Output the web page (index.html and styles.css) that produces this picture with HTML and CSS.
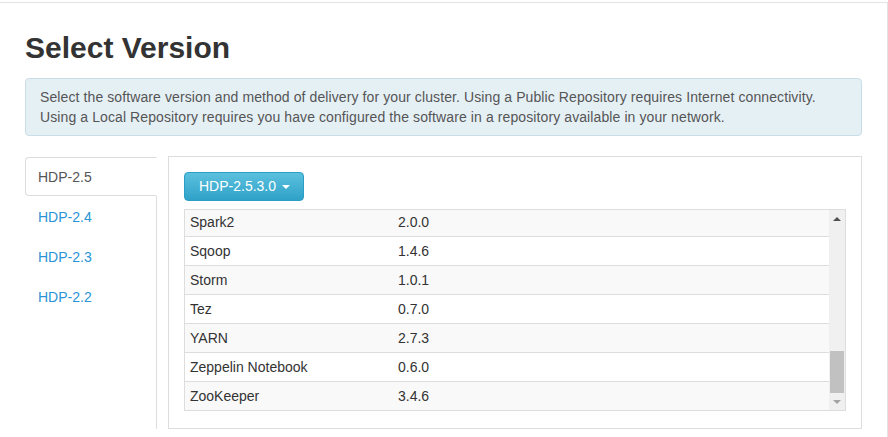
FILE: index.html
```html
<!DOCTYPE html>
<html>
<head>
<meta charset="utf-8">
<title>Select Version</title>
<link rel="stylesheet" href="styles.css">
</head>
<body>
<div class="page">
  <h2 class="title">Select Version</h2>
  <div class="alert">Select the software version and method of delivery for your cluster. Using a Public Repository requires Internet connectivity.<br>Using a Local Repository requires you have configured the software in a repository available in your network.</div>
  <div class="stack">
    <ul class="tabs">
      <li class="tab active"><a class="tab-link">HDP-2.5</a></li>
      <li class="tab"><a class="tab-link">HDP-2.4</a></li>
      <li class="tab"><a class="tab-link">HDP-2.3</a></li>
      <li class="tab"><a class="tab-link">HDP-2.2</a></li>
    </ul>
    <div class="panel">
      <button class="btn-info">HDP-2.5.3.0 <span class="caret"></span></button>
      <div class="grid">
        <div class="rows">
          <div class="row stripe"><span class="cell">Spark2</span><span class="cell">2.0.0</span></div>
          <div class="row"><span class="cell">Sqoop</span><span class="cell">1.4.6</span></div>
          <div class="row stripe"><span class="cell">Storm</span><span class="cell">1.0.1</span></div>
          <div class="row"><span class="cell">Tez</span><span class="cell">0.7.0</span></div>
          <div class="row stripe"><span class="cell">YARN</span><span class="cell">2.7.3</span></div>
          <div class="row"><span class="cell">Zeppelin Notebook</span><span class="cell">0.6.0</span></div>
          <div class="row stripe"><span class="cell">ZooKeeper</span><span class="cell">3.4.6</span></div>
        </div>
        <div class="scrollbar">
          <div class="sb-btn"><span class="arrow-up"></span></div>
          <div class="sb-track"><div class="sb-thumb"></div></div>
          <div class="sb-btn"><span class="arrow-down"></span></div>
        </div>
      </div>
    </div>
  </div>
</div>
</body>
</html>
```

FILE: styles.css
```css
html, body {
  margin: 0;
  padding: 0;
  background: #fff;
}
body {
  font-family: "Liberation Sans", Arial, Helvetica, sans-serif;
  font-size: 14px;
  line-height: 20px;
  color: #333;
}
.page {
  box-sizing: border-box;
  width: 888px;
  height: 435px;
  margin-top: 2px;
  border-top: 1px solid #e3e3e3;
  border-right: 1px solid #e3e3e3;
  padding: 0 25px;
}
.title {
  margin: 28px 0 14px;
  font-size: 30px;
  line-height: 33px;
  font-weight: bold;
  color: #333;
}
.alert {
  padding: 8px 14px;
  border: 1px solid #c9dde6;
  border-radius: 4px;
  background: #e5f0f5;
  color: #555;
  margin-bottom: 20px;
  letter-spacing: 0.1px;
  white-space: nowrap;
}
.stack {
  display: flex;
  gap: 11px;
  height: 273px;
}
.tabs {
  list-style: none;
  margin: 1px 0 0;
  padding: 0;
  width: 132px;
  box-sizing: border-box;
  border-right: 1px solid #ddd;
}
.tab {
  margin-right: -1px;
  margin-bottom: 1px;
}
.tab-link {
  display: block;
  padding: 9px 12px 8px;
  border: 1px solid transparent;
  border-radius: 4px 0 0 4px;
  color: #2a94d6;
  cursor: pointer;
}
.tab.active .tab-link {
  border-color: #ddd;
  border-right-color: transparent;
  background: #fff;
  color: #555;
}
.panel {
  flex: 1;
  border: 1px solid #ddd;
  padding: 15px 15px 17px;
}
.btn-info {
  display: block;
  font-family: inherit;
  font-size: 14px;
  line-height: 19px;
  padding: 4px 13px 4px 14px;
  color: #fff;
  border: 1px solid #2a9ec4;
  border-radius: 4px;
  background: linear-gradient(to bottom, #5bc0de 0%, #2fa2c8 100%);
  cursor: pointer;
}
.caret {
  display: inline-block;
  width: 0;
  height: 0;
  margin-left: 2px;
  vertical-align: middle;
  border-top: 4px solid #fff;
  border-left: 4px solid transparent;
  border-right: 4px solid transparent;
}
.grid {
  margin-top: 8px;
  height: 202px;
  box-sizing: border-box;
  border: 1px solid #ddd;
  display: flex;
}
.rows {
  flex: 1;
  display: flex;
  flex-direction: column;
  justify-content: flex-end;
  overflow: hidden;
}
.row {
  flex-shrink: 0;
  display: grid;
  grid-template-columns: 208px 1fr;
  height: 28px;
  border-top: 1px solid #ddd;
  background: #fff;
}
.row:first-child {
  border-top: none;
}
.row.stripe {
  background: #f9f9f9;
}
.cell {
  padding: 4px 5px;
  line-height: 20px;
  color: #333;
}
.scrollbar {
  width: 16px;
  background: #f0f0f0;
  display: flex;
  flex-direction: column;
}
.sb-btn {
  height: 17px;
  display: flex;
  align-items: center;
  justify-content: center;
}
.sb-track {
  flex: 1;
  display: flex;
  flex-direction: column;
  justify-content: flex-end;
}
.sb-thumb {
  height: 42px;
  margin: 0 1px;
  background: #c1c1c1;
}
.arrow-up {
  width: 0;
  height: 0;
  border-bottom: 4px solid #505050;
  border-left: 4px solid transparent;
  border-right: 4px solid transparent;
}
.arrow-down {
  width: 0;
  height: 0;
  border-top: 4px solid #a3a3a3;
  border-left: 4px solid transparent;
  border-right: 4px solid transparent;
}
```
